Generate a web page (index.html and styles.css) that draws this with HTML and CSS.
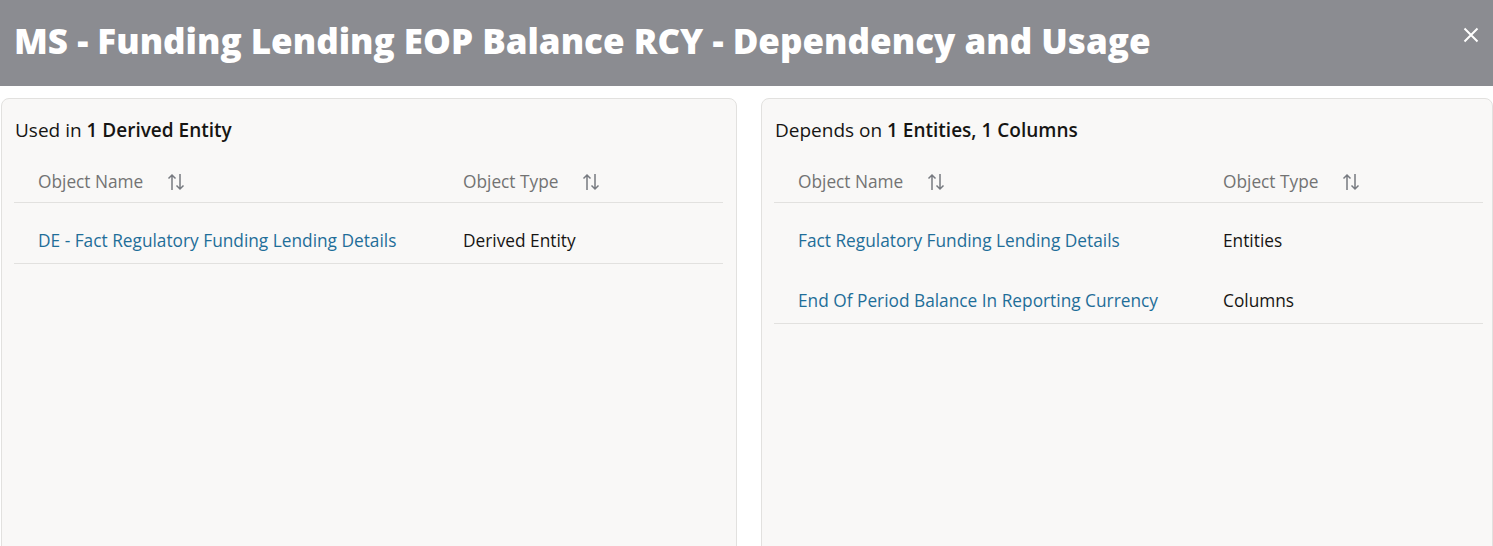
FILE: index.html
```html
<!DOCTYPE html>
<html>
<head>
<meta charset="utf-8">
<link rel="stylesheet" href="styles.css">
</head>
<body>
<div class="dialog">
  <header class="dlg-header">
    <h1 class="dlg-title">MS - Funding Lending EOP Balance RCY - Dependency and Usage</h1>
    <button class="close-btn" aria-label="Close">
      <svg width="16" height="16" viewBox="0 0 16 16"><path d="M1.5 1.5 L14.5 14.5 M14.5 1.5 L1.5 14.5" stroke="#fff" stroke-width="2" fill="none"/></svg>
    </button>
  </header>
  <main class="dlg-body">
    <section class="card">
      <h2 class="card-title">Used in <b>1 Derived Entity</b></h2>
      <div class="table">
        <div class="row head">
          <div class="cell c1"><span>Object Name</span><svg class="sort" width="18" height="20" viewBox="0 0 18 20"><path d="M5 18 V3 M1.5 6.5 L5 3 L8.5 6.5 M13 2 V17 M9.5 13.5 L13 17 L16.5 13.5" stroke="#777a80" stroke-width="1.5" fill="none"/></svg></div>
          <div class="cell c2"><span>Object Type</span><svg class="sort" width="18" height="20" viewBox="0 0 18 20"><path d="M5 18 V3 M1.5 6.5 L5 3 L8.5 6.5 M13 2 V17 M9.5 13.5 L13 17 L16.5 13.5" stroke="#777a80" stroke-width="1.5" fill="none"/></svg></div>
        </div>
        <div class="row last">
          <div class="cell c1"><a class="link">DE - Fact Regulatory Funding Lending Details</a></div>
          <div class="cell c2">Derived Entity</div>
        </div>
      </div>
    </section>
    <section class="card">
      <h2 class="card-title">Depends on <b>1 Entities, 1 Columns</b></h2>
      <div class="table">
        <div class="row head">
          <div class="cell c1"><span>Object Name</span><svg class="sort" width="18" height="20" viewBox="0 0 18 20"><path d="M5 18 V3 M1.5 6.5 L5 3 L8.5 6.5 M13 2 V17 M9.5 13.5 L13 17 L16.5 13.5" stroke="#777a80" stroke-width="1.5" fill="none"/></svg></div>
          <div class="cell c2"><span>Object Type</span><svg class="sort" width="18" height="20" viewBox="0 0 18 20"><path d="M5 18 V3 M1.5 6.5 L5 3 L8.5 6.5 M13 2 V17 M9.5 13.5 L13 17 L16.5 13.5" stroke="#777a80" stroke-width="1.5" fill="none"/></svg></div>
        </div>
        <div class="row">
          <div class="cell c1"><a class="link">Fact Regulatory Funding Lending Details</a></div>
          <div class="cell c2">Entities</div>
        </div>
        <div class="row last">
          <div class="cell c1"><a class="link">End Of Period Balance In Reporting Currency</a></div>
          <div class="cell c2">Columns</div>
        </div>
      </div>
    </section>
  </main>
</div>
</body>
</html>
```
FILE: styles.css
```css
* { box-sizing: border-box; }
html, body { margin: 0; padding: 0; background: #fff; }
body {
  font-family: "Open Sans", "Noto Sans", sans-serif;
  color: #161513;
  width: 1493px;
  height: 546px;
  overflow: hidden;
}
.dlg-header {
  height: 86px;
  background: #8b8c91;
  display: flex;
  align-items: center;
  justify-content: space-between;
  padding: 0 14px 4px 14px;
}
.dlg-title {
  margin: 0;
  color: #fff;
  font-family: "Open Sans", sans-serif;
  font-weight: 800;
  font-size: 35px;
  line-height: 48px;
}
.close-btn {
  background: none;
  border: 0;
  padding: 0;
  width: 16px;
  height: 16px;
  display: flex;
  align-self: flex-start;
  margin-top: 27px;
}
.dlg-body {
  display: grid;
  grid-template-columns: 736px 732px;
  column-gap: 24px;
  padding: 12px 0 0 1px;
}
.card {
  background: #f9f8f7;
  border: 1px solid #e2e1df;
  border-radius: 8px;
  height: 470px;
  padding: 0 13px 0 12px;
}
.card + .card { padding-right: 9px; }
.card-title {
  margin: 0;
  font-size: 19px;
  font-weight: 400;
  padding: 19px 1px 0;
  line-height: 24px;
}
.card-title b { font-weight: 600; }
.table { margin-top: 18px; }
.row {
  display: grid;
  grid-template-columns: 425px 1fr;
  height: 60px;
  padding-top: 26px;
  align-items: start;
  font-size: 17.3px;
  line-height: 24px;
}
.row.last { height: 61px; border-bottom: 1px solid #e2e1df; }
.row.head {
  height: 43px;
  padding-top: 10px;
  color: #737373;
  border-bottom: 1px solid #e2e1df;
}
.cell { padding-left: 24px; display: flex; align-items: center; height: 24px; }
.sort { margin-left: 24px; }
.link { color: #1f6e99; text-decoration: none; }
```
